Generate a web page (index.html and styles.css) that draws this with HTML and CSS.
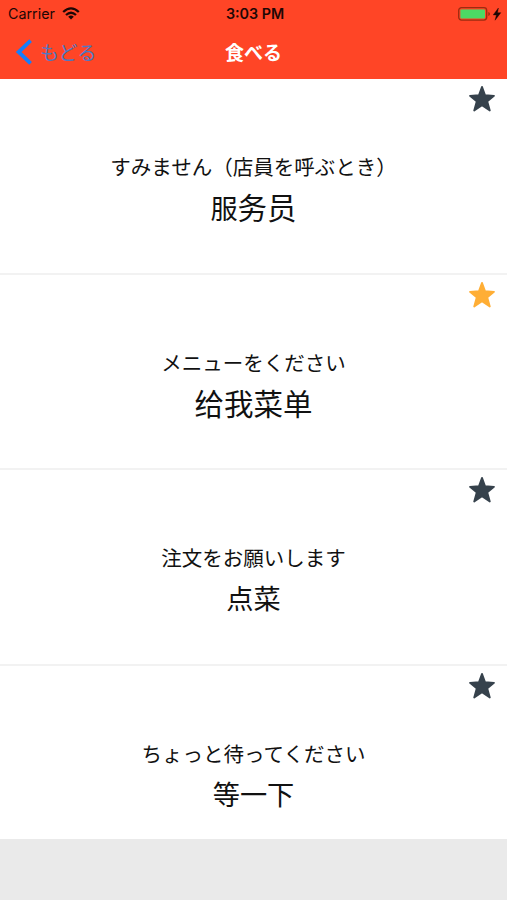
FILE: index.html
```html
<!DOCTYPE html>
<html lang="ja">
<head>
  <meta charset="UTF-8">
  <meta name="viewport" content="width=device-width, initial-scale=1.0">
  <title>食べる</title>
  <link rel="stylesheet" href="styles.css">
</head>
<body>
  <svg width="0" height="0" class="defs">
    <symbol id="star" viewBox="0 0 28 28">
      <path d="M14 1.9 L17.1 10.2 L26 10.8 L19.3 16.4 L21.8 25.5 L14 20.3 L6.2 25.5 L8.7 16.4 L2 10.8 L10.9 10.2 Z" fill="currentColor" stroke="currentColor" stroke-width="1.8" stroke-linejoin="round"/>
    </symbol>
  </svg>

  <header class="header">
    <div class="status">
      <div class="carrier">
        <span>Carrier</span>
        <svg class="wifi" width="18" height="13" viewBox="0 0 18 13" fill="none" stroke="#1d0705" stroke-width="2.3">
          <path d="M1.2 5 Q9 -2.3 16.8 5"/>
          <path d="M4 8 Q9 3.4 14 8"/>
          <path d="M9 12.6 L6.2 9.7 Q9 7.4 11.8 9.7 Z" fill="#1d0705" stroke="none"/>
        </svg>
      </div>
      <div class="time">3:03 PM</div>
      <div class="power">
        <svg width="44" height="14" viewBox="0 0 44 14">
          <rect x="0.7" y="0.7" width="28" height="12.4" rx="2.8" fill="none" stroke="#9c2c10" stroke-width="1.3"/>
          <rect x="2.4" y="2.4" width="24.6" height="9" rx="1" fill="#4cd964"/>
          <path d="M30.3 5 Q32 5.4 32 7 Q32 8.6 30.3 9 Z" fill="#9c2c10"/>
          <path d="M40.4 1 L35.2 7.9 L38.4 7.9 L37.1 13.2 L42.8 5.7 L39.5 5.7 Z" fill="#1d0705" stroke="#1d0705" stroke-width="0.4"/>
        </svg>
      </div>
    </div>
    <nav class="nav">
      <a class="back">
        <svg width="18" height="26" viewBox="0 0 18 26">
          <path d="M16.6 1.6 L4.6 13 L16.6 24.4" fill="none" stroke="#157efb" stroke-width="3.8"/>
        </svg>
        <span>もどる</span>
      </a>
      <h1 class="title">食べる</h1>
    </nav>
  </header>

  <main class="list">
    <section class="phrase">
      <svg class="star"><use href="#star"/></svg>
      <p class="ja">すみません（店員を呼ぶとき）</p>
      <p class="zh" lang="zh-CN">服<span class="wide">务员</span></p>
    </section>
    <section class="phrase">
      <svg class="star on"><use href="#star"/></svg>
      <p class="ja">メニューをください</p>
      <p class="zh" lang="zh-CN"><span class="wide">给我菜单</span></p>
    </section>
    <section class="phrase">
      <svg class="star"><use href="#star"/></svg>
      <p class="ja">注文をお願いします</p>
      <p class="zh" lang="zh-CN">点菜</p>
    </section>
    <section class="phrase">
      <svg class="star"><use href="#star"/></svg>
      <p class="ja">ちょっと待ってください</p>
      <p class="zh" lang="zh-CN">等一下</p>
    </section>
  </main>
</body>
</html>
```
FILE: styles.css
```css
* {
  box-sizing: border-box;
}
body {
  margin: 0;
  height: 900px;
  overflow: hidden;
  background: #eaeaea;
  color: #111;
  font-family: Inter, "Noto Sans CJK JP", sans-serif;
}
p, h1 {
  margin: 0;
}
.defs {
  display: block;
}
.header {
  height: 79px;
  background: #ff4526;
}
.status {
  display: grid;
  grid-template-columns: 1fr auto 1fr;
  align-items: center;
  height: 27px;
  padding: 0 5px 0 8px;
  color: #1d0705;
  font-size: 14.3px;
}
.carrier {
  display: flex;
  align-items: center;
  gap: 7px;
}
.time {
  font-weight: 600;
}
.power {
  display: flex;
  justify-content: flex-end;
}
.nav {
  display: grid;
  grid-template-columns: 1fr auto 1fr;
  align-items: center;
  height: 50px;
  padding: 0 14px;
}
.back {
  display: flex;
  align-items: center;
  gap: 8px;
  color: #4f78c0;
  font-size: 19px;
}
.back span {
  margin-top: -2px;
}
.title {
  margin-top: -2px;
  color: #fff;
  font-size: 19px;
  font-weight: 700;
}
.list {
  height: 760px;
  overflow: hidden;
}
.phrase {
  position: relative;
  height: 195.5px;
  padding-top: 74px;
  background: #fff;
  border-bottom: 2px solid #f2f2f2;
  text-align: center;
}
.star {
  position: absolute;
  top: 6px;
  right: 11px;
  width: 28px;
  height: 28px;
  color: #36424c;
}
.star.on {
  color: #ffae35;
}
.ja {
  font-size: 20.5px;
  line-height: 30px;
}
.zh {
  margin-top: 2px;
  font-family: "Noto Sans CJK SC", sans-serif;
  font-size: 27.2px;
  line-height: 42px;
}
.wide {
  font-size: 29.5px;
}
```
